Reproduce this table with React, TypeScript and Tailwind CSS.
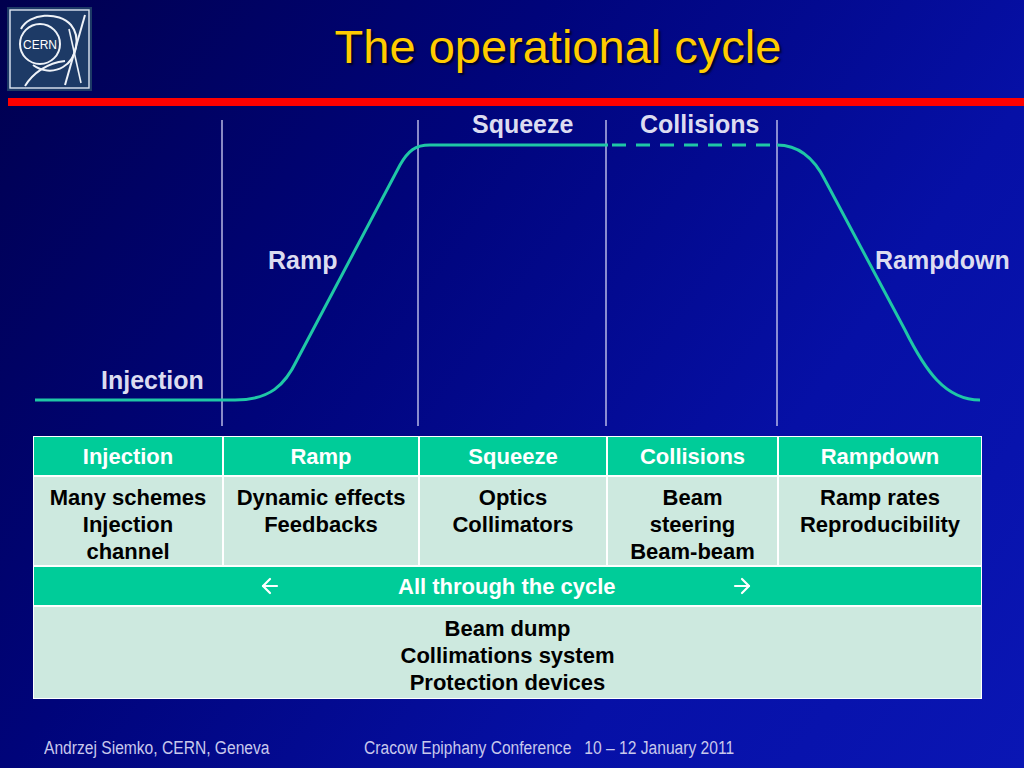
import React from "react";
import { ArrowLeft, ArrowRight } from "lucide-react";

const cols = ["Injection", "Ramp", "Squeeze", "Collisions", "Rampdown"];

const body: string[][] = [
  ["Many schemes", "Injection", "channel"],
  ["Dynamic effects", "Feedbacks"],
  ["Optics", "Collimators"],
  ["Beam", "steering", "Beam-beam"],
  ["Ramp rates", "Reproducibility"],
];

function CernLogo() {
  return (
    <svg width="85" height="84" viewBox="0 0 85 84" className="block">
      <rect x="0" y="0" width="85" height="84" fill="#1d3a66" />
      <rect x="3" y="3" width="79" height="78" fill="none" stroke="#dfe6f2" strokeWidth="1.4" />
      {/* small ring around the lettering */}
      <circle cx="33" cy="37" r="20" fill="none" stroke="#eef2f8" strokeWidth="2" />
      {/* big loop hanging from the top */}
      <path d="M14 22 C22 6 52 4 64 18 C74 30 70 52 56 60 C46 66 34 64 26 58" fill="none" stroke="#eef2f8" strokeWidth="2" />
      <path d="M78 8 L58 78" fill="none" stroke="#eef2f8" strokeWidth="2" />
      <path d="M62 22 L74 76" fill="none" stroke="#eef2f8" strokeWidth="1.6" />
      <path d="M18 79 C26 66 40 56 58 54" fill="none" stroke="#eef2f8" strokeWidth="2" />
      <text x="33" y="42" textAnchor="middle" fontSize="12" fill="#ffffff" fontFamily="'Liberation Sans', Arial, sans-serif">CERN</text>
    </svg>
  );
}

function Chart() {
  const vlines = [222, 418, 606, 777];
  return (
    <div className="relative h-[330px] w-full">
      <svg width="1024" height="330" className="absolute left-0 top-0">
        {vlines.map((x) => (
          <line key={x} x1={x} y1={14} x2={x} y2={320} stroke="#c4c4ec" strokeWidth="1.4" />
        ))}
        <path
          d="M35 294 L235 294 C270 294 285 279 297 254 L400 59 C408 45 415 39 430 39 L608 39"
          fill="none"
          stroke="#1fc7a6"
          strokeWidth="3"
        />
        <path d="M612 39 L777 39" fill="none" stroke="#1fc7a6" strokeWidth="3" strokeDasharray="14 10" />
        <path
          d="M777 39 C800 39 815 54 825 74 L905 224 C925 264 945 294 980 294"
          fill="none"
          stroke="#1fc7a6"
          strokeWidth="3"
        />
      </svg>
      <span className="absolute left-[472px] top-[6px] text-[25px] font-bold leading-none text-[#dcdcf0]">Squeeze</span>
      <span className="absolute left-[640px] top-[6px] text-[25px] font-bold leading-none text-[#dcdcf0]">Collisions</span>
      <span className="absolute left-[268px] top-[142px] text-[25px] font-bold leading-none text-[#dcdcf0]">Ramp</span>
      <span className="absolute left-[875px] top-[142px] text-[25px] font-bold leading-none text-[#dcdcf0]">Rampdown</span>
      <span className="absolute left-[101px] top-[262px] text-[25px] font-bold leading-none text-[#dcdcf0]">Injection</span>
    </div>
  );
}

function CycleTable() {
  return (
    <div className="ml-[33px] w-[949px] bg-white p-px grid grid-cols-[188px_194px_186px_169px_202px] gap-[2px] text-[22px] font-bold leading-[27px]">
      {cols.map((c) => (
        <div key={c} className="h-[38px] bg-[#00cc99] text-white flex items-center justify-center">
          {c}
        </div>
      ))}
      {body.map((lines, i) => (
        <div key={i} className="h-[88px] bg-[#cde9df] text-black text-center pt-[7px]">
          {lines.map((l) => (
            <div key={l}>{l}</div>
          ))}
        </div>
      ))}
      <div className="col-span-5 h-[38px] bg-[#00cc99] text-white flex items-center pl-[224px]">
        <ArrowLeft size={24} strokeWidth={2.2} className="shrink-0" />
        <span className="ml-[116px]">All through the cycle</span>
        <ArrowRight size={24} strokeWidth={2.2} className="ml-[114px] shrink-0" />
      </div>
      <div className="col-span-5 h-[91px] bg-[#cde9df] text-black text-center pt-[8px]">
        <div>Beam dump</div>
        <div>Collimations system</div>
        <div>Protection devices</div>
      </div>
    </div>
  );
}

export default function App() {
  return (
    <div className="w-[1024px] h-[768px] overflow-hidden bg-[linear-gradient(125deg,#00004e_0%,#00047a_35%,#0610a6_70%,#0a16b4_100%)] font-['Liberation_Sans',Arial,sans-serif]">
      <div className="flex h-[98px]">
        <div className="ml-[7px] mt-[7px]">
          <CernLogo />
        </div>
        <h1 className="flex-1 text-center mt-[23px] text-[47px] leading-none text-[#ffcc00] [text-shadow:2px_2px_2px_rgba(0,0,0,0.7)]">
          The operational cycle
        </h1>
      </div>
      <div className="ml-[8px] h-[8px] bg-[#ff0000]" />
      <Chart />
      <CycleTable />
      <div className="mt-[40px] flex text-[18px] leading-[18px] text-[#c8c8ec]">
        <span className="ml-[44px] w-[320px] shrink-0">
          <span className="inline-block origin-left scale-x-[0.867] whitespace-nowrap">Andrzej Siemko, CERN, Geneva</span>
        </span>
        <span className="inline-block origin-left scale-x-[0.867] whitespace-nowrap">
          Cracow Epiphany Conference&nbsp;&nbsp; 10 – 12 January 2011
        </span>
      </div>
    </div>
  );
}
